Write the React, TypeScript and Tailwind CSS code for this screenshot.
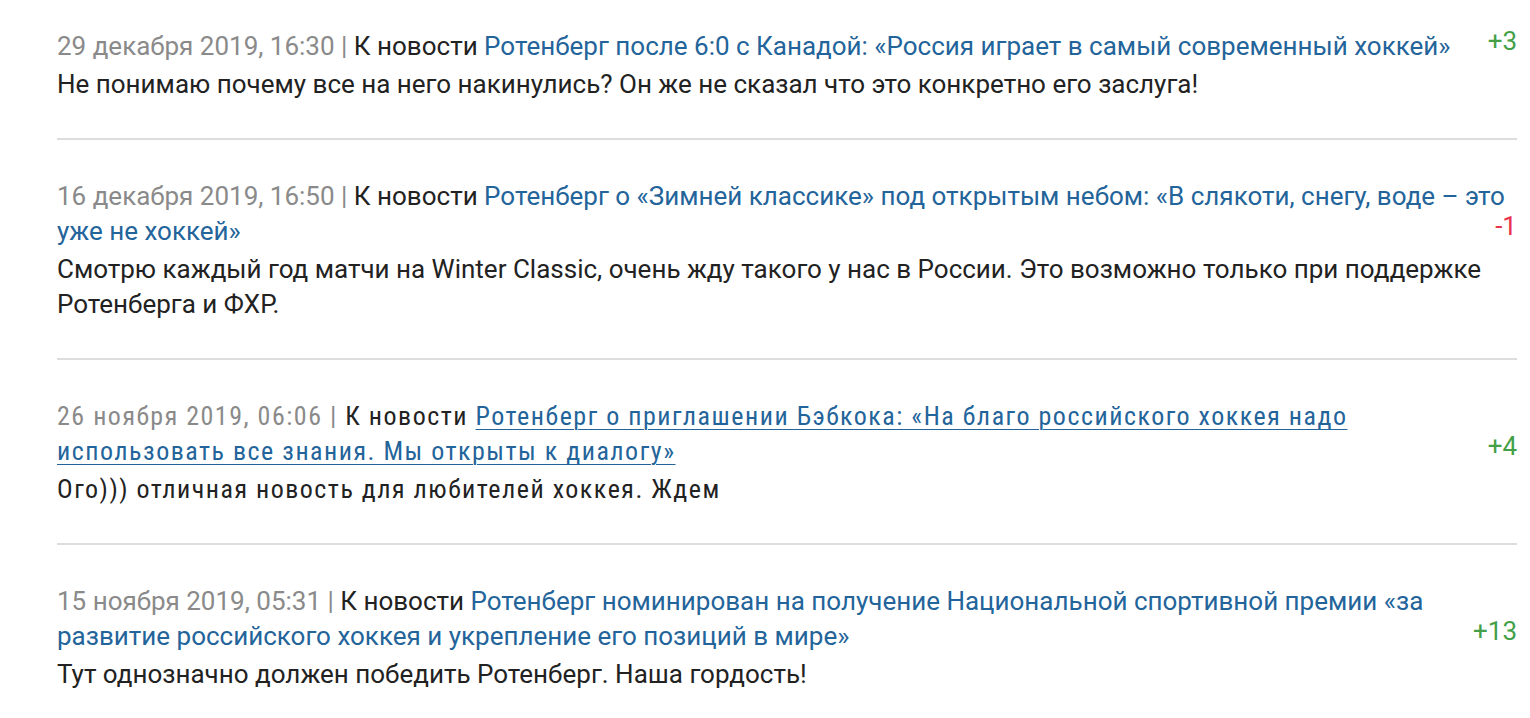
type Comment = {
  id: number;
  date: string;
  title: string;
  text: string;
  score: number;
  narrow?: boolean;
};

const comments: Comment[] = [
  {
    id: 1,
    date: "29 декабря 2019, 16:30",
    title: "Ротенберг после 6:0 с Канадой: «Россия играет в самый современный хоккей»",
    text: "Не понимаю почему все на него накинулись? Он же не сказал что это конкретно его заслуга!",
    score: 3,
  },
  {
    id: 2,
    date: "16 декабря 2019, 16:50",
    title: "Ротенберг о «Зимней классике» под открытым небом: «В слякоти, снегу, воде – это уже не хоккей»",
    text: "Смотрю каждый год матчи на Winter Classic, очень жду такого у нас в России. Это возможно только при поддержке Ротенберга и ФХР.",
    score: -1,
  },
  {
    id: 3,
    date: "26 ноября 2019, 06:06",
    title: "Ротенберг о приглашении Бэбкока: «На благо российского хоккея надо использовать все знания. Мы открыты к диалогу»",
    text: "Ого))) отличная новость для любителей хоккея. Ждем",
    score: 4,
    narrow: true,
  },
  {
    id: 4,
    date: "15 ноября 2019, 05:31",
    title: "Ротенберг номинирован на получение Национальной спортивной премии «за развитие российского хоккея и укрепление его позиций в мире»",
    text: "Тут однозначно должен победить Ротенберг. Наша гордость!",
    score: 13,
  },
];

const CommentItem = ({ c, last }: { c: Comment; last: boolean }) => {
  // the hovered comment in the shot is drawn in a condensed face
  const font = c.narrow
    ? "font-['Roboto_Condensed','Liberation_Sans_Narrow','DejaVu_Sans_Condensed',Roboto,sans-serif] [font-stretch:condensed] tracking-[1.5px]"
    : "font-[Roboto,sans-serif]";
  return (
    <div className={`${font} pt-[39px] first:pt-[29px] ${last ? "" : "pb-[36px] border-b-2 border-[#dddddd]"}`}>
      <div className="leading-[35px]">
        <span className="text-[#8a8a8a]">{c.date} | </span>
        <span className="text-[#222222]">К новости </span>
        <a href="#" className={`text-[#23649a] ${c.narrow ? "underline underline-offset-4 decoration-1" : ""}`}>
          {c.title}
        </a>
        <span
          className={`float-right -mt-[5px] pl-6 ${c.score > 0 ? "text-[#43a047]" : "text-[#e8344b]"} ${c.narrow ? "font-[Roboto,sans-serif] [font-stretch:normal] tracking-normal" : ""}`}
        >
          {c.score > 0 ? `+${c.score}` : c.score}
        </span>
      </div>
      <p className="leading-[35px] mt-[3px] text-[#222222]">{c.text}</p>
    </div>
  );
};

export default function App() {
  return (
    <div className="min-h-screen bg-white">
      <div className="ml-[57px] w-[1460px] text-[26px]">
        {comments.map((c, i) => (
          <CommentItem key={c.id} c={c} last={i === comments.length - 1} />
        ))}
      </div>
    </div>
  );
}
